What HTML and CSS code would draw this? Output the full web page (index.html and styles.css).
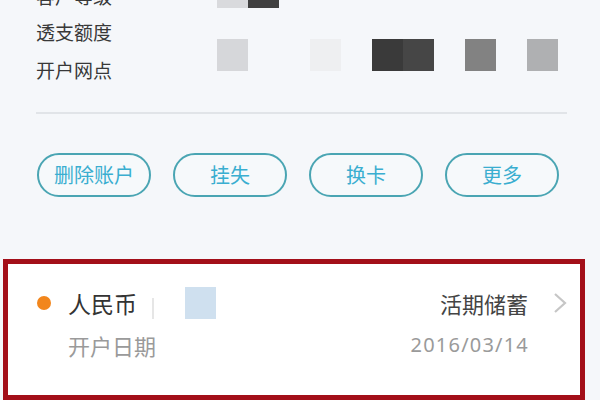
FILE: index.html
```html
<!DOCTYPE html>
<html lang="zh-CN">
<head>
<meta charset="utf-8">
<link rel="stylesheet" href="styles.css">
</head>
<body>
<div class="page">
  <div class="info">
    <div class="label r1">客户等级</div>
    <div class="mosaic m1">
      <span class="cell c1 light1"></span>
      <span class="cell c2 dark1"></span>
    </div>
    <div class="label r2">透支额度</div>
    <div class="label r3">开户网点</div>
    <div class="mosaic m2">
      <span class="cell c1 g1"></span>
      <span class="cell c4 g2"></span>
      <span class="cell c6 g3"></span>
      <span class="cell c7 g4"></span>
      <span class="cell c9 g5"></span>
      <span class="cell c11 g6"></span>
    </div>
  </div>
  <div class="divider"></div>
  <div class="actions">
    <button class="pill">删除账户</button>
    <button class="pill">挂失</button>
    <button class="pill">换卡</button>
    <button class="pill">更多</button>
  </div>
  <div class="card">
    <div class="card-row top">
      <span class="dot"></span>
      <span class="currency">人民币</span>
      <span class="sep"></span>
      <span class="blur"></span>
      <span class="spacer"></span>
      <span class="type">活期储蓄</span>
      <svg class="chev" width="14" height="22" viewBox="0 0 14 22"><path d="M2 2 L12 11 L2 20" fill="none" stroke="#c6c6c6" stroke-width="2.2"/></svg>
    </div>
    <div class="card-row bottom">
      <span class="date-label">开户日期</span>
      <span class="spacer"></span>
      <span class="date">2016/03/14</span>
    </div>
  </div>
</div>
</body>
</html>
```
FILE: styles.css
```css
html, body {
  margin: 0;
  padding: 0;
  background: #f5f7fa;
  overflow: hidden;
  width: 600px;
  height: 400px;
}
.page {
  font-family: "Noto Sans CJK SC", "Noto Sans", sans-serif;
  color: #333;
}
.info {
  display: grid;
  grid-template-columns: 181px 1fr;
  grid-template-rows: 38px 38px 38px;
  margin-top: -23px;
  padding-left: 36px;
}
.label {
  font-size: 19px;
  line-height: 38px;
  color: #383838;
  grid-column: 1;
}
.r1 { grid-row: 1; }
.r2 { grid-row: 2; margin-top: -2px; }
.r3 { grid-row: 3; margin-top: -2px; }
.mosaic {
  grid-column: 2;
  display: grid;
  grid-template-columns: repeat(11, 31px);
}
.m1 { grid-row: 1; height: 31px; align-self: start; }
.m2 { grid-row: 2 / 4; height: 32px; margin-top: 24px; align-self: start; }
.cell { display: block; height: 100%; }
.c1 { grid-column: 1; }
.c2 { grid-column: 2; }
.c4 { grid-column: 4; }
.c6 { grid-column: 6; }
.c7 { grid-column: 7; }
.c9 { grid-column: 9; }
.c11 { grid-column: 11; }
.light1 { background: #d9dadd; }
.dark1 { background: #404040; }
.g1 { background: #d6d7da; }
.g2 { background: #eeeff1; }
.g3 { background: #3a3a3a; }
.g4 { background: #464646; }
.g5 { background: #828282; }
.g6 { background: #afb0b2; }
.divider {
  height: 2px;
  background: #e1e4e8;
  margin: 21px 33px 0 36px;
}
.actions {
  display: flex;
  gap: 22px;
  padding-left: 37px;
  margin-top: 39px;
}
.pill {
  width: 114px;
  height: 44px;
  box-sizing: border-box;
  border: 2px solid #4aa5b3;
  border-radius: 22px;
  background: #f6f9fb;
  color: #3aaed0;
  font-family: "Noto Sans CJK SC", "Noto Sans", sans-serif;
  font-size: 20px;
  line-height: 38px;
  padding: 0;
}
.card {
  margin: 62px 0 0 3px;
  width: 582px;
  height: 141px;
  box-sizing: border-box;
  border: 5px solid #a30f19;
  background: #fff;
  padding: 23px 13px 0 29px;
}
.card-row {
  display: flex;
  align-items: center;
}
.top { height: 32px; }
.bottom { height: 28px; margin-top: 12px; padding-left: 31px; padding-right: 39px; }
.dot {
  width: 14px;
  height: 14px;
  border-radius: 50%;
  background: #f2861c;
  margin-right: 17px;
}
.currency {
  font-size: 23px;
  line-height: 32px;
  color: #333;
}
.sep {
  width: 2px;
  height: 21px;
  background: #e6e6e6;
  margin: 10px 0 0 15px;
}
.blur {
  width: 31px;
  height: 32px;
  background: #cfe0ef;
  margin-left: 31px;
}
.spacer { flex: 1; }
.type {
  font-size: 22px;
  line-height: 32px;
  color: #444;
  margin-right: 25px;
}
.chev { display: block; }
.date-label {
  font-size: 22px;
  line-height: 28px;
  color: #9a9a9a;
}
.date {
  font-family: "Noto Sans", "Liberation Sans", sans-serif;
  font-size: 20px;
  line-height: 28px;
  letter-spacing: 1.2px;
  margin-right: -1px;
  color: #9a9a9a;
}
```
